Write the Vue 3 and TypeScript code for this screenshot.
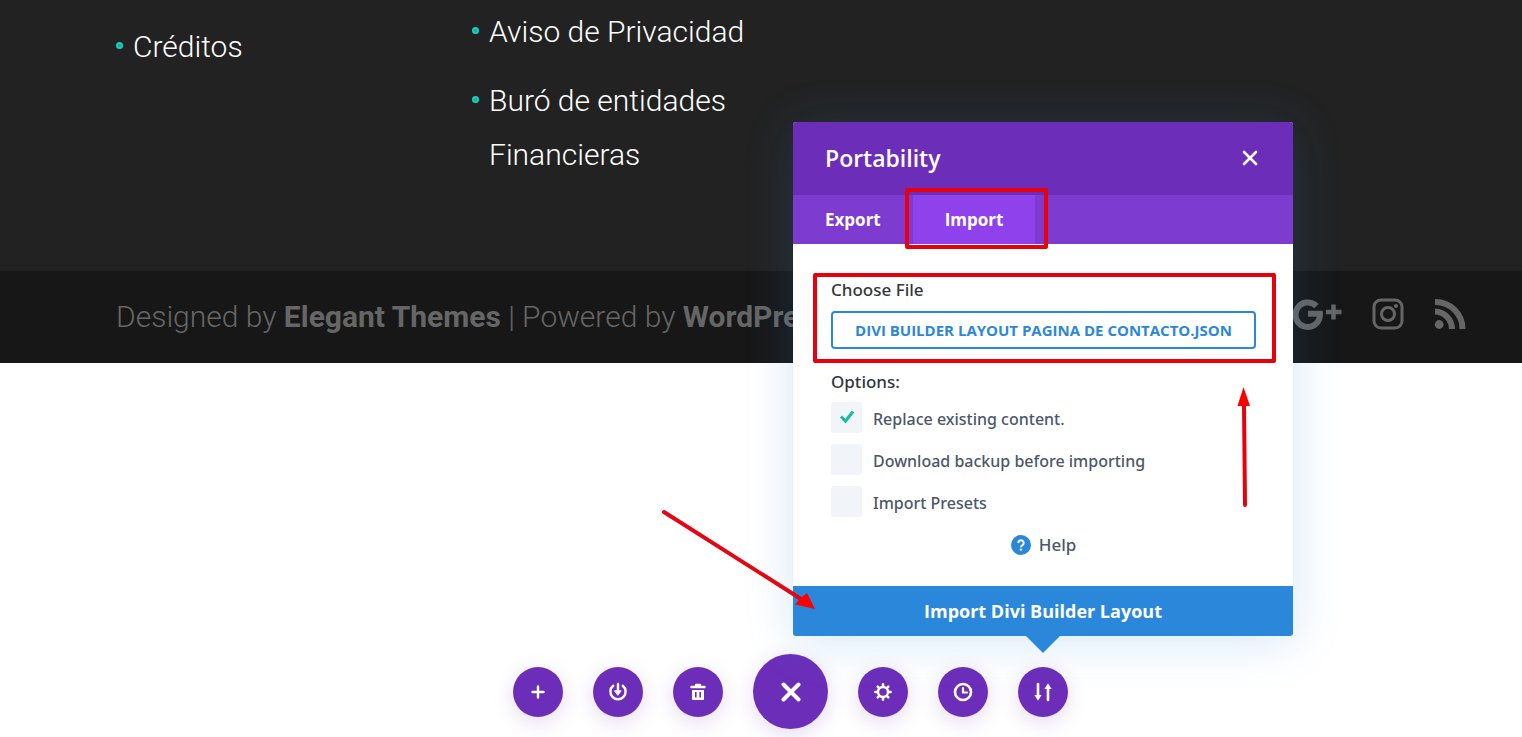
<script setup lang="ts">
import { ref } from 'vue'

interface Option {
  id: string
  label: string
  checked: boolean
}

const tabs = ['Export', 'Import']
const activeTab = ref('Import')
const fileName = ref('Divi Builder Layout pagina de contacto.json')
const options = ref<Option[]>([
  { id: 'replace', label: 'Replace existing content.', checked: true },
  { id: 'backup', label: 'Download backup before importing', checked: false },
  { id: 'presets', label: 'Import Presets', checked: false },
])
</script>

<template>
  <div class="page">
    <footer class="site-footer">
      <div class="widgets">
        <ul class="widget lower">
          <li><a href="#">Créditos</a></li>
        </ul>
        <ul class="widget">
          <li><a href="#">Aviso de Privacidad</a></li>
          <li><a href="#">Buró de entidades Financieras</a></li>
        </ul>
      </div>
      <div class="bottom-bar">
        <p class="credits">
          Designed by <a href="#">Elegant Themes</a> | Powered by <a href="#">WordPress</a>
        </p>
        <nav class="social" aria-label="Social">
          <a href="#" aria-label="Google Plus">
            <svg width="50" height="32" viewBox="0 0 50 32">
              <path d="M24.500 8.200A12.200 12.200 0 1 0 27.900 15.800H16" fill="none" stroke="currentColor" stroke-width="6" />
              <path d="M41.500 6.500v15M34 14h15.500" fill="none" stroke="currentColor" stroke-width="4.500" />
            </svg>
          </a>
          <a href="#" aria-label="Instagram">
            <svg width="32" height="32" viewBox="0 0 32 32" fill="none" stroke="currentColor" stroke-width="3">
              <rect x="2" y="2" width="28" height="28" rx="7" />
              <circle cx="16" cy="16" r="6.500" />
              <circle cx="24" cy="8" r="2" fill="currentColor" stroke="none" />
            </svg>
          </a>
          <a href="#" aria-label="RSS">
            <svg width="32" height="32" viewBox="0 0 32 32" fill="none" stroke="currentColor" stroke-width="6">
              <circle cx="5.200" cy="26.500" r="4.400" fill="currentColor" stroke="none" />
              <path d="M1 13.500A17.500 17.500 0 0 1 18 31M1 4A27 27 0 0 1 28.500 31" />
            </svg>
          </a>
        </nav>
      </div>
    </footer>

    <div class="builder-bar">
      <button class="round" aria-label="Load from library">
        <svg viewBox="0 0 20 20"><path d="M10 4.500v11M4.500 10h11" stroke-width="2.400" /></svg>
      </button>
      <button class="round" aria-label="Save to library">
        <svg viewBox="0 0 20 20">
          <path d="M5.200 3.800A7.600 7.600 0 1 0 14.800 3.800" stroke-width="2.400" />
          <path d="M10 2v8" stroke-width="2.400" />
          <path d="M6.800 8.800h6.400L10 13z" fill="currentColor" stroke-width="1" />
        </svg>
      </button>
      <button class="round" aria-label="Clear layout">
        <svg viewBox="0 0 20 20">
          <path d="M3.500 5h13M8 3h4" stroke-width="2.400" />
          <path fill="currentColor" stroke="none" fill-rule="evenodd" d="M4 8h12v9a1 1 0 0 1-1 1H5a1 1 0 0 1-1-1zM7 10v5.500h1.600V10zM11.400 10v5.500H13V10z" />
        </svg>
      </button>
      <button class="round large" aria-label="Close settings">
        <svg viewBox="0 0 20 20"><path d="M2.500 2.500l15 15M17.500 2.500l-15 15" stroke-width="4" /></svg>
      </button>
      <button class="round" aria-label="Page settings">
        <svg viewBox="0 0 20 20">
          <circle cx="10" cy="10" r="5" stroke-width="2.400" />
          <path d="M10 4.500V2.400M10 15.500v2.100M4.500 10H2.400M15.500 10h2.100M6.200 6.200L4.700 4.700M13.800 13.800l1.500 1.500M13.800 6.200l1.500-1.500M6.200 13.800l-1.500 1.500" stroke-width="2.600" />
        </svg>
      </button>
      <button class="round" aria-label="History">
        <svg viewBox="0 0 20 20">
          <circle cx="10" cy="10" r="8" stroke-width="2.600" />
          <path d="M10 6v4.500h4" stroke-width="2.200" />
        </svg>
      </button>
      <div class="anchor">
        <button class="round" aria-label="Portability">
          <svg viewBox="0 0 20 20">
            <path d="M5 2v12M15 18V6" stroke-width="2.600" />
            <path d="M2.500 13.500h5L5 17.500zM12.500 6.500h5L15 2.500z" fill="currentColor" stroke-width="1.200" />
          </svg>
        </button>

        <section class="modal" role="dialog" aria-labelledby="modal-title">
          <header class="modal-header">
            <h2 id="modal-title">Portability</h2>
            <button class="close" aria-label="Close">
              <svg width="16" height="16" viewBox="0 0 16 16" fill="none" stroke="currentColor" stroke-width="2.600" stroke-linecap="round">
                <path d="M2 2l12 12M14 2L2 14" />
              </svg>
            </button>
          </header>
          <div class="tabs">
            <button
              v-for="tab in tabs"
              :key="tab"
              class="tab"
              :class="{ active: tab === activeTab }"
              @click="activeTab = tab"
            >
              {{ tab }}
              <span v-if="tab === 'Import'" class="mark mark-tab"></span>
            </button>
          </div>
          <div class="modal-body">
            <div class="file-field">
              <label class="heading" for="file-button">Choose File</label>
              <button id="file-button" class="file-button">{{ fileName }}</button>
              <span class="mark mark-file"></span>
            </div>
            <fieldset class="options">
              <legend class="heading">Options:</legend>
              <label v-for="o in options" :key="o.id" class="option" :for="o.id">
                <input :id="o.id" v-model="o.checked" type="checkbox" />
                <svg v-if="o.checked" class="tick" width="31" height="31" viewBox="0 0 31 31">
                  <path d="M10 14.500l4.500 4.700L22 9.500" />
                </svg>
                <span>{{ o.label }}</span>
              </label>
            </fieldset>
            <a class="help" href="#">
              <svg width="20" height="20" viewBox="0 0 20 20">
                <circle cx="10" cy="10" r="10" fill="#2b87da" />
                <path d="M7.300 8a2.700 2.700 0 1 1 4.200 2.200c-1 .7-1.500 1-1.500 2" fill="none" stroke="#fff" stroke-width="2" />
                <circle cx="10" cy="14.600" r="1.200" fill="#fff" />
              </svg>
              Help
            </a>
          </div>
          <button class="submit">Import Divi Builder Layout</button>

          <svg class="arrow arrow-submit" width="160" height="110" viewBox="0 0 160 110">
            <path d="M5 6L142 93" stroke="#e30613" stroke-width="4" stroke-linecap="round" />
            <path d="M156 103l-20-4.500 5-6 7-5.500z" fill="#f00" />
          </svg>
          <svg class="arrow arrow-file" width="20" height="125" viewBox="0 0 20 125">
            <path d="M12 120L11 20" stroke="#e8000d" stroke-width="4" stroke-linecap="round" />
            <path d="M10.500 2l6.500 19H4.500z" fill="#f00" />
          </svg>
        </section>
      </div>
    </div>
  </div>
</template>

<style>
body {
  margin: 0;
  background: #fff;
}
</style>

<style scoped>
*,
*::before {
  box-sizing: border-box;
}
.page {
  position: relative;
  min-height: 100vh;
  overflow: hidden;
  font-family: "Open Sans", "Noto Sans", sans-serif;
}
button {
  font: inherit;
  border: 0;
  padding: 0;
  cursor: pointer;
}
a {
  color: inherit;
  text-decoration: none;
}
.site-footer {
  background: #222;
  font: 300 30px/54px Roboto, sans-serif;
}
.widgets {
  display: grid;
  grid-template-columns: repeat(4, 1fr);
  gap: 74px;
  padding: 5px 56px 74px 116px;
}
.widget {
  list-style: none;
  margin: 0;
  padding: 0;
  color: #fff;
}
.widget.lower {
  padding-top: 15px;
}
.widget li {
  position: relative;
  padding-left: 17px;
  margin-bottom: 15px;
}
.widget li::before {
  content: "";
  position: absolute;
  left: 0;
  top: 22px;
  width: 7px;
  height: 7px;
  border: 2px solid #14d0be;
  border-radius: 50%;
  background: #16a698;
}
.bottom-bar {
  display: flex;
  justify-content: space-between;
  padding: 19px 56px 19px 116px;
  background: #171717;
  color: #666;
}
.credits {
  margin: 0;
}
.credits a {
  font-weight: 700;
}
.social {
  display: flex;
  gap: 30px;
  padding-top: 8px;
}
.social svg {
  display: block;
}
.builder-bar {
  position: absolute;
  left: 0;
  right: 0;
  bottom: 8px;
  display: flex;
  justify-content: center;
  align-items: center;
  gap: 30px;
  padding-left: 59px;
}
.anchor {
  position: relative;
}
.round {
  display: flex;
  align-items: center;
  justify-content: center;
  width: 50px;
  height: 50px;
  border-radius: 50%;
  background: #6c2eb9;
  color: #fff;
  box-shadow: 0 5px 20px rgba(108, 46, 185, 0.18);
}
.round svg {
  width: 20px;
  height: 20px;
  fill: none;
  stroke: currentColor;
  stroke-linecap: round;
}
.round.large {
  width: 75px;
  height: 75px;
}
.modal {
  position: absolute;
  bottom: calc(100% + 31px);
  left: 50%;
  width: 500px;
  margin-left: -250px;
  background: #fff;
  border-radius: 3px;
  box-shadow: 0 5px 50px rgba(43, 135, 218, 0.2);
}
.modal::after {
  content: "";
  position: absolute;
  top: 100%;
  left: 50%;
  margin-left: -17px;
  border: 17px solid transparent;
  border-top-color: #2b87da;
  border-bottom: 0;
}
.modal-header {
  display: flex;
  align-items: center;
  justify-content: space-between;
  height: 73px;
  padding: 0 35px 0 32px;
  border-radius: 3px 3px 0 0;
  background: #6c2eb9;
  color: #fff;
}
.modal-header h2 {
  margin: 0;
  font-size: 23px;
  line-height: 32px;
  font-weight: 600;
}
.close {
  display: flex;
  background: none;
  color: #fff;
}
.tabs {
  display: flex;
  background: #7e3bd0;
}
.tab {
  position: relative;
  padding: 0 32px;
  background: none;
  color: #fff;
  font-size: 17px;
  font-weight: 700;
  line-height: 49px;
}
.tab.active {
  background: #8f42ec;
}
.mark {
  position: absolute;
  border: 4px solid #e8000d;
  border-radius: 2px;
  pointer-events: none;
}
.mark-tab {
  inset: -7px -13px -5px -8px;
}
.modal-body {
  padding: 34px 37px 29px 38px;
  font-family: "Noto Sans", "Open Sans", sans-serif;
  font-weight: 500;
}
.file-field {
  position: relative;
}
.mark-file {
  inset: -5px -20px -14px -18px;
}
.heading {
  display: block;
  padding: 0;
  color: #32373c;
  font-size: 17px;
  line-height: 24px;
}
.file-button {
  display: block;
  width: 100%;
  height: 38px;
  margin-top: 9px;
  border: 2px solid #2b87da;
  border-radius: 4px;
  background: #fff;
  color: #2b87da;
  font-family: "Open Sans", "Noto Sans", sans-serif;
  font-size: 15px;
  font-weight: 700;
  text-transform: uppercase;
}
.options {
  margin: 21px 0 0;
  padding: 0;
  border: 0;
}
.options legend {
  margin-bottom: 8px;
}
.option {
  position: relative;
  display: flex;
  align-items: flex-start;
  gap: 11px;
  margin-bottom: 9px;
  color: #4c5866;
  font-size: 16px;
  line-height: 31px;
}
.option input {
  appearance: none;
  width: 31px;
  height: 31px;
  margin: 0;
  border-radius: 3px;
  background: #f1f4f9;
}
.option span {
  padding-top: 2px;
}
.tick {
  position: absolute;
  left: 0;
  top: 0;
  fill: none;
  stroke: #15bd9e;
  stroke-width: 3;
}
.help {
  display: flex;
  align-items: center;
  justify-content: center;
  gap: 8px;
  margin-top: 5px;
  color: #4c5866;
  font-size: 17px;
  line-height: 24px;
}
.submit {
  display: block;
  width: 100%;
  border-radius: 0 0 3px 3px;
  background: #2b87da;
  color: #fff;
  font-size: 18px;
  line-height: 50px;
  font-weight: 700;
}
.arrow {
  position: absolute;
  fill: none;
  pointer-events: none;
}
.arrow-submit {
  left: -134px;
  bottom: 20px;
}
.arrow-file {
  right: 40px;
  top: 263px;
}
</style>
